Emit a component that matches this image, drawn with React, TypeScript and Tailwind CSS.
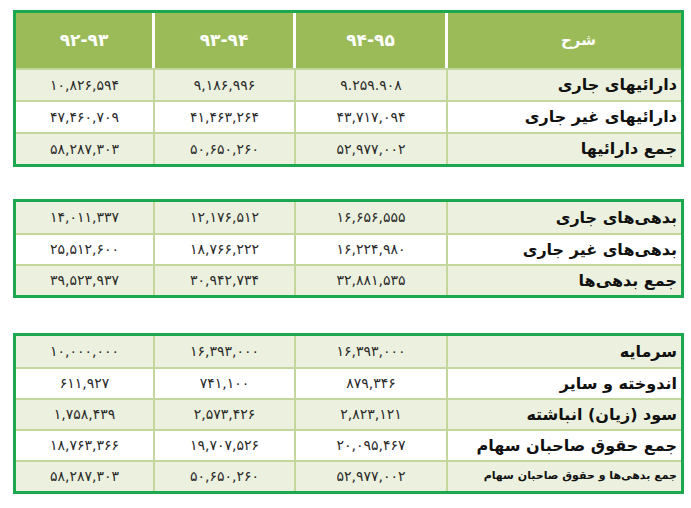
import React from 'react'

type Row = { cells: [string, string, string]; label: string; small?: boolean }

const assets: Row[] = [
  { cells: ['۱۰,۸۲۶,۵۹۴', '۹,۱۸۶,۹۹۶', '۹.۲۵۹.۹۰۸'], label: 'دارائیهای جاری' },
  { cells: ['۴۷,۴۶۰,۷۰۹', '۴۱,۴۶۳,۲۶۴', '۴۳,۷۱۷,۰۹۴'], label: 'دارائیهای غیر جاری' },
  { cells: ['۵۸,۲۸۷,۳۰۳', '۵۰,۶۵۰,۲۶۰', '۵۲,۹۷۷,۰۰۲'], label: 'جمع دارائیها' },
]

const debts: Row[] = [
  { cells: ['۱۴,۰۱۱,۳۳۷', '۱۲,۱۷۶,۵۱۲', '۱۶,۶۵۶,۵۵۵'], label: 'بدهی‌های جاری' },
  { cells: ['۲۵,۵۱۲,۶۰۰', '۱۸,۷۶۶,۲۲۲', '۱۶,۲۲۴,۹۸۰'], label: 'بدهی‌های غیر جاری' },
  { cells: ['۳۹,۵۲۳,۹۳۷', '۳۰,۹۴۲,۷۳۴', '۳۲,۸۸۱,۵۳۵'], label: 'جمع بدهی‌ها' },
]

const equity: Row[] = [
  { cells: ['۱۰,۰۰۰,۰۰۰', '۱۶,۳۹۳,۰۰۰', '۱۶,۳۹۳,۰۰۰'], label: 'سرمایه' },
  { cells: ['۶۱۱,۹۲۷', '۷۴۱,۱۰۰', '۸۷۹,۳۴۶'], label: 'اندوخته و سایر' },
  { cells: ['۱,۷۵۸,۴۳۹', '۲,۵۷۳,۴۲۶', '۲,۸۲۳,۱۲۱'], label: 'سود (زیان) انباشته' },
  { cells: ['۱۸,۷۶۳,۳۶۶', '۱۹,۷۰۷,۵۲۶', '۲۰,۰۹۵,۴۶۷'], label: 'جمع حقوق صاحبان سهام' },
  { cells: ['۵۸,۲۸۷,۳۰۳', '۵۰,۶۵۰,۲۶۰', '۵۲,۹۷۷,۰۰۲'], label: 'جمع بدهی‌ها و حقوق صاحبان سهام', small: true },
]

const cols = 'grid grid-cols-[139px_141px_152px_1fr]'

function Header() {
  return (
    <div className={`${cols} h-[55px] bg-[#9bbb59] text-white font-bold text-[17px]`}>
      {['۹۲-۹۳', '۹۳-۹۴', '۹۴-۹۵'].map(h => (
        <div key={h} className="flex items-center justify-center border-r-[3px] border-white">{h}</div>
      ))}
      <div dir="rtl" className="flex items-center justify-center pl-7 text-[15px]">شرح</div>
    </div>
  )
}

function Table({ rows, header, rowH }: { rows: Row[]; header?: boolean; rowH: string }) {
  return (
    <div className="w-[671px] border-[3px] border-[#1ba84f]">
      {header && <Header />}
      {rows.map((r, i) => (
        <div
          key={r.label}
          className={`${cols} ${rowH} ${i % 2 === 0 ? 'bg-[#ebf1de]' : 'bg-white'} ${i === 0 && !header ? '' : 'border-t-2 border-[#c3d69b]'}`}
        >
          {r.cells.map((c, j) => (
            <div key={j} className="flex items-center justify-center border-r-2 border-[#c3d69b] text-[14px] text-[#2a2a2a]">
              {c}
            </div>
          ))}
          <div
            dir="rtl"
            className={`flex items-center pr-1 font-bold text-[#111] ${r.small ? 'text-[11px]' : 'text-[16px]'}`}
          >
            {r.label}
          </div>
        </div>
      ))}
    </div>
  )
}

export default function App() {
  return (
    <div className="w-[691px] h-[508px] bg-white pt-[10px] pl-[13px] font-['DejaVu_Sans',sans-serif]">
      <Table rows={assets} header rowH="h-[32px]" />
      <div className="mt-[32px]">
        <Table rows={debts} rowH="h-[31px]" />
      </div>
      <div className="mt-[35px]">
        <Table rows={equity} rowH="h-[31px]" />
      </div>
    </div>
  )
}
